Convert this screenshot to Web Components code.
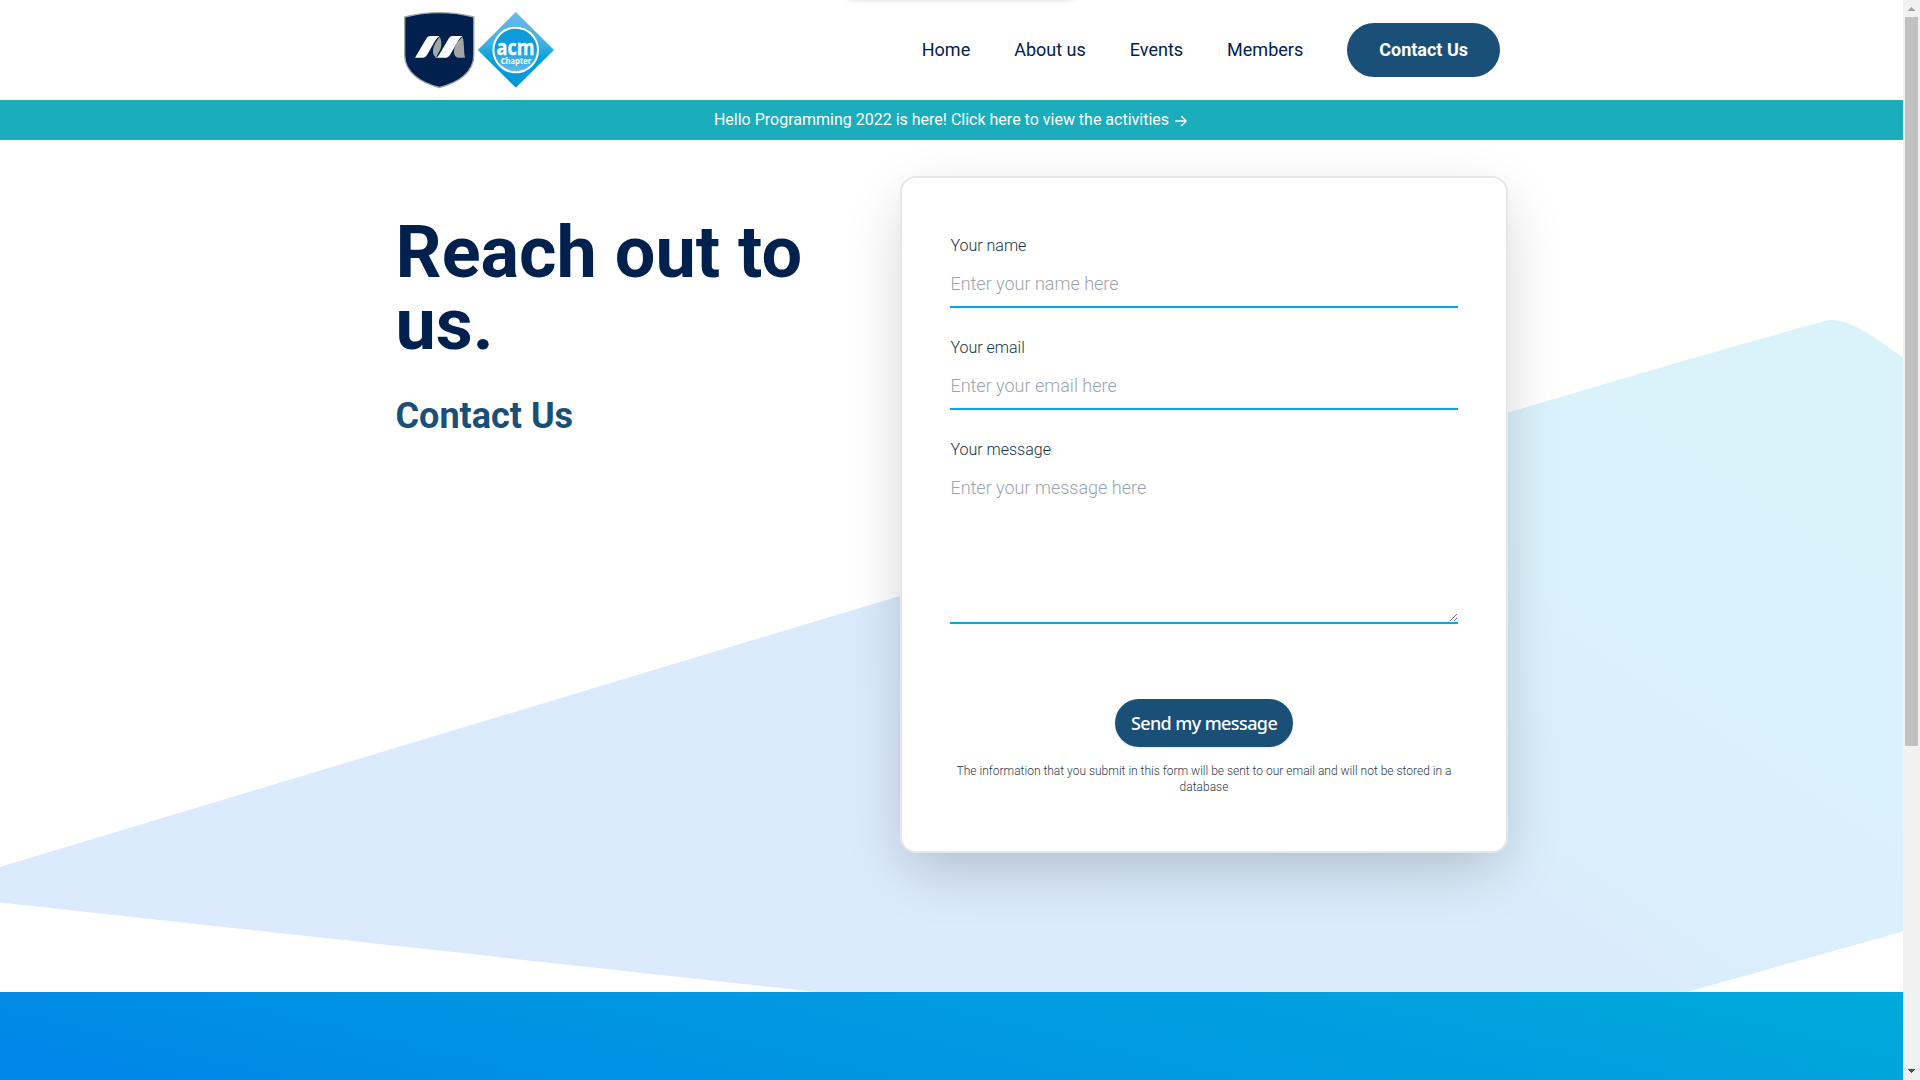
<!DOCTYPE html>
<html lang="en">
<head>
<meta charset="utf-8">
<title>Contact Us - ACM Chapter</title>
<style>
html,body{margin:0;height:100%;overflow:hidden;background:#fff;font-family:Roboto,"Liberation Sans",sans-serif}
</style>
</head>
<body>
<contact-page></contact-page>
<script>
const define=(name,html)=>customElements.define(name,class extends HTMLElement{
  constructor(){super();this.attachShadow({mode:'open'}).innerHTML=html;}
});

define('chapter-logo',`<style>:host{display:block;width:152px;height:78px}svg{display:block}</style>
<svg width="152" height="78" viewBox="403 11 152 78">
<defs>
<linearGradient id="d" x1="0" y1="0" x2="0" y2="1"><stop offset="0" stop-color="#68bbe6"/><stop offset=".42" stop-color="#3fb0e2"/><stop offset=".6" stop-color="#0b9fdb"/><stop offset="1" stop-color="#0096d6"/></linearGradient>
<linearGradient id="c" x1="0" y1="0" x2="0" y2="1"><stop offset="0" stop-color="#0b9bd8"/><stop offset=".42" stop-color="#0d9dda"/><stop offset="1" stop-color="#67bbe7"/></linearGradient>
</defs>
<path d="M404.7 17Q422 12.700 439.300 12.700Q457 12.700 473.800 17V55C473.800 72 459 82.500 439.300 87.500C420 82.500 404.700 72 404.700 55Z" fill="#00204e" stroke="#a6a5a1" stroke-width="1.300"/>
<path d="M439.500 37C441.500 39 442 46 440 50L436 57.500C433 56 431 50 436 42Z" fill="#a3a5a4"/>
<path d="M462.500 37C464.500 42 463.500 50 465 57.700H458C453.500 57 452 50 457.500 42Z" fill="#a3a5a4"/>
<path d="M415 57.700L427 37.500Q428 36 430 36H439.500Q437 37.500 435 41L427 55Q425.300 57.700 423 57.700Z" fill="#fff"/>
<path d="M435 57.700Q437.500 57.700 439 55L449 38Q450.300 36 452.500 36H462.500Q460 37.500 458 41L450 55Q448.300 57.700 446 57.700Z" fill="#fff"/>
<path d="M515.800 12L554 50L515.800 87.800L477.800 50Z" fill="url(#d)"/>
<circle cx="515.700" cy="50" r="22.300" fill="url(#c)" stroke="#fff" stroke-width="2"/>
<text x="496.500" y="55" font-family="Open Sans,sans-serif" font-size="21" font-weight="700" fill="#fff" stroke="#fff" stroke-width=".3" textLength="38" lengthAdjust="spacingAndGlyphs">acm</text>
<text x="500.700" y="63.700" font-family="Open Sans,sans-serif" font-size="8.500" font-weight="700" fill="#fff" textLength="30.500" lengthAdjust="spacingAndGlyphs">Chapter</text>
</svg>`);

define('nav-link',`<style>:host{display:block;color:#00204e;font-size:18px;line-height:28px;white-space:nowrap}
:host([primary]){background:#1a4f78;color:#fff;font-weight:700;padding:13px 32px;border-radius:27px}</style><slot></slot>`);

define('site-header',`<style>:host{display:flex;height:100px;align-items:center;justify-content:space-between;padding:0 403px;box-sizing:border-box}
nav{display:flex;align-items:center;gap:44px}</style>
<chapter-logo></chapter-logo>
<nav><nav-link>Home</nav-link><nav-link>About us</nav-link><nav-link>Events</nav-link><nav-link>Members</nav-link><nav-link primary>Contact Us</nav-link></nav>`);

define('news-banner',`<style>:host{display:flex;box-sizing:border-box;height:40px;padding-right:1px;align-items:center;justify-content:center;gap:5px;background:#1badbc;color:#fff;font-size:16px;line-height:24px}
svg{margin-top:2px}</style>
<slot></slot><svg width="14" height="14" viewBox="0 0 14 14" fill="none" stroke="#fff" stroke-width="1.300"><path d="M1.200 7H12M7.200 2L12.200 7L7.200 12"/></svg>`);

define('page-title',`<style>:host{display:block;width:504px;padding-top:41px}
h1{margin:0;font-size:72px;line-height:72px;font-weight:700;color:#00204e}
h2{margin:35px 0 0;font-size:36px;line-height:40px;font-weight:700;color:#1a4f78}</style>
<h1><slot></slot></h1><h2><slot name="sub"></slot></h2>`);

customElements.define('form-field',class extends HTMLElement{
  constructor(){
    super();
    const hint=this.getAttribute('hint'),area=this.hasAttribute('area');
    this.attachShadow({mode:'open'}).innerHTML=`<style>:host{display:block}
label{display:block;font-size:16px;line-height:24px;font-weight:300;color:#17343f;text-indent:.4px}
input,textarea{display:block;box-sizing:border-box;width:100%;height:46px;margin:4px 0 0;padding:7px 0 9px;border:0;border-bottom:2px solid #00a9e0;border-radius:0;background:transparent;outline:0;font:300 18px/28px Roboto,sans-serif;color:#042330;text-indent:.4px}
textarea{height:158px;padding:8px 0;resize:vertical}
::placeholder{color:#9ca3af;opacity:1}</style>
<label><slot></slot></label>${area?`<textarea placeholder="${hint}"></textarea>`:`<input placeholder="${hint}">`}`;
  }
});

define('contact-card',`<style>:host{display:flex;flex-direction:column;box-sizing:border-box;width:608px;height:677px;border:2px solid #e5e7eb;border-radius:16px;background:#fff;padding:56px 48px 0;box-shadow:0 20px 60px -8px rgba(0,0,0,.21);align-items:center}
form-field{width:100%;margin-bottom:28px}
button{margin:47px 0 0;width:178px;height:48px;border:0;border-radius:24px;padding:0 0 1px;background:#1a4f78;color:#fff;font:500 18px/24px "Noto Sans","Open Sans",sans-serif;letter-spacing:-.6px;box-shadow:0 1px 2px rgba(0,0,0,.1);white-space:nowrap}
p{margin:16px 0 0;font-size:12px;line-height:16px;font-weight:300;color:#2f3a4a;text-align:center}</style>
<form-field hint="Enter your name here">Your name</form-field>
<form-field hint="Enter your email here">Your email</form-field>
<form-field hint="Enter your message here" area>Your message</form-field>
<button>Send my message</button>
<p>The information that you submit in this form will be sent to our email and will not be stored in a database</p>`);

define('contact-section',`<style>:host{display:block;position:relative;height:852px}
.bg{position:absolute;inset:0}
.row{position:relative;display:flex;align-items:flex-start;justify-content:space-between;padding:36px 395px 0 395.500px}</style>
<svg class="bg" width="1903" height="852" viewBox="0 140 1903 852"><defs><linearGradient id="g" gradientUnits="userSpaceOnUse" x1="1100" y1="900" x2="1500" y2="300"><stop offset="0" stop-color="#dbeafc"/><stop offset=".25" stop-color="#daebfb"/><stop offset=".7" stop-color="#daf2fb"/><stop offset="1" stop-color="#daf3fb"/></linearGradient></defs>
<path d="M0 867L1500 415Q1700 355 1825 321Q1832 319 1842 321.500C1860 326 1880 341 1903 357.500V931.500L1687 992H817L0 902.500Z" fill="url(#g)"/></svg>
<div class="row"><page-title>Reach out to us.<span slot="sub">Contact Us</span></page-title><contact-card></contact-card></div>`);

define('site-footer',`<style>:host{display:block;height:88px;background:linear-gradient(to top right,#0085e8 41%,#008ce7 50%,#0093e4 60%,#0098e2 68%,#009fe0 82%,#00aadb) 0 0/1903px 458px no-repeat}</style>`);

define('scroll-track',`<style>:host{display:flex;flex-direction:column;justify-content:space-between;align-items:center;width:17px;height:1080px;background:#f1f1f1}
div{display:flex;flex-direction:column;align-items:center}
svg{display:block}i{display:block;width:13px;height:729px;background:#c1c1c1}</style>
<div><svg width="17" height="17" shape-rendering="crispEdges"><path d="M8 7H9V8H10V9H11V10H12V11H5V10H6V9H7V8H8Z" fill="#a3a3a3"/></svg><i></i></div>
<svg width="17" height="17" shape-rendering="crispEdges"><path d="M5 6H12V7H11V8H10V9H9V10H8V9H7V8H6V7H5Z" fill="#505050"/></svg>`);

define('contact-page',`<style>:host{display:flex;width:1920px;height:1080px;overflow:hidden;background:#fff;position:relative}
main{width:1903px;flex:none}
.edge{position:absolute;left:848px;top:-12px;width:226px;height:10px;border-radius:6px;box-shadow:0 1px 7px rgba(0,0,0,.18)}</style>
<main><site-header></site-header><news-banner>Hello Programming 2022 is here! Click here to view the activities</news-banner><contact-section></contact-section><site-footer></site-footer></main>
<scroll-track></scroll-track><div class="edge"></div>`);
</script>
</body>
</html>
